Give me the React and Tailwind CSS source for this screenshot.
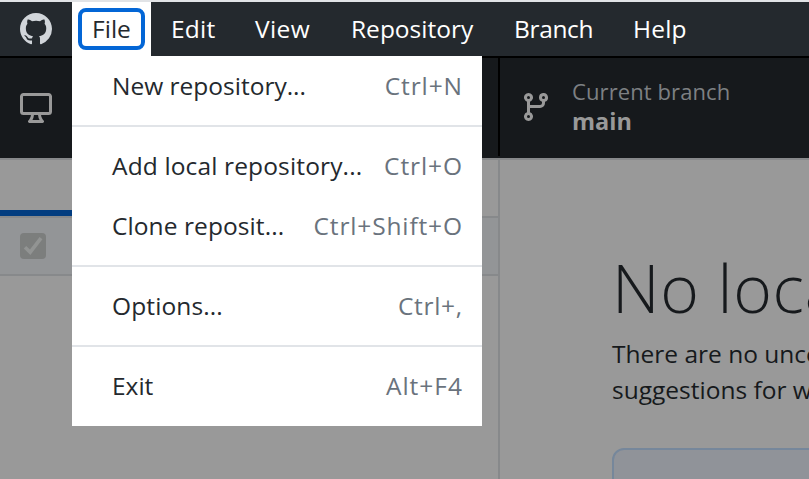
const menus = [
  { label: "Edit", box: "w-[84px]", text: "tracking-[0.2px]" },
  { label: "View", box: "w-[96px]", text: "tracking-[0.4px]" },
  { label: "Repository", box: "w-[163px]", text: "tracking-[0px]" },
  { label: "Branch", box: "w-[119px]", text: "tracking-[-0.35px]" },
  { label: "Help", box: "w-[93px]", text: "tracking-[0.2px]" },
];

function Item({ label, keys, labelClass = "", keysClass = "" }) {
  return (
    <div className="flex h-[60px] items-center justify-between whitespace-nowrap pr-[20px] pl-[40px]">
      <span className={labelClass}>{label}</span>
      <span className={"text-[#6a737d] " + keysClass}>{keys}</span>
    </div>
  );
}

function Separator() {
  return <div className="my-[9px] h-[2px] bg-[#e1e4e8]" />;
}

function MarkIcon() {
  return (
    <svg width="32" height="32" viewBox="0 0 16 16" fill="#d1d5da">
      <path d="M8 0C3.58 0 0 3.58 0 8c0 3.54 2.29 6.53 5.47 7.59.4.07.55-.17.55-.38 0-.19-.01-.82-.01-1.49-2.01.37-2.53-.49-2.69-.94-.09-.23-.48-.94-.82-1.13-.28-.15-.68-.52-.01-.53.63-.01 1.08.58 1.23.82.72 1.21 1.87.87 2.33.66.07-.52.28-.87.51-1.07-1.78-.2-3.64-.89-3.64-3.95 0-.87.31-1.59.82-2.15-.08-.2-.36-1.02.08-2.12 0 0 .67-.21 2.2.82.64-.18 1.32-.27 2-.27s1.36.09 2 .27c1.53-1.04 2.2-.82 2.2-.82.44 1.1.16 1.92.08 2.12.51.56.82 1.27.82 2.15 0 3.07-1.87 3.75-3.65 3.95.29.25.54.73.54 1.48 0 1.07-.01 1.93-.01 2.2 0 .21.15.46.55.38A8.01 8.01 0 0 0 16 8c0-4.42-3.58-8-8-8Z" />
    </svg>
  );
}

function DesktopIcon() {
  return (
    <svg width="32" height="32" viewBox="0 0 16 16" fill="#999999">
      <path d="M14.25 1c.966 0 1.75.784 1.75 1.75v7.5A1.75 1.75 0 0 1 14.25 12h-3.727c.099 1.041.52 1.872 1.292 2.757A.752.752 0 0 1 11.25 16h-6.5a.75.75 0 0 1-.565-1.243c.772-.885 1.192-1.716 1.292-2.757H1.75A1.75 1.75 0 0 1 0 10.25v-7.5C0 1.784.784 1 1.75 1ZM1.75 2.5a.25.25 0 0 0-.25.25v7.5c0 .138.112.25.25.25h12.5a.25.25 0 0 0 .25-.25v-7.5a.25.25 0 0 0-.25-.25ZM9.018 12H6.982a5.72 5.72 0 0 1-.765 2.5h3.566a5.72 5.72 0 0 1-.765-2.5Z" />
    </svg>
  );
}

function BranchIcon() {
  return (
    <svg width="32" height="32" viewBox="0 0 16 16" fill="#999999">
      <path fillRule="evenodd" d="M11.75 2.5a.75.75 0 1 0 0 1.5.75.75 0 0 0 0-1.5Zm-2.25.75a2.25 2.25 0 1 1 3 2.122V6A2.5 2.5 0 0 1 10 8.5H5v2.128a2.251 2.251 0 1 1-1.5 0V5.372a2.25 2.25 0 1 1 1.5 0V7h5a1 1 0 0 0 1-1v-.628A2.25 2.25 0 0 1 9.5 3.25ZM4.25 12a.75.75 0 1 0 0 1.5.75.75 0 0 0 0-1.5ZM3.5 3.25a.75.75 0 1 1 1.5 0 .75.75 0 0 1-1.5 0Z" />
    </svg>
  );
}

export default function App() {
  return (
    <div className="relative flex h-[479px] w-[809px] flex-col overflow-hidden bg-[#999999] font-['Open_Sans','Noto_Sans',sans-serif] text-[24.5px] leading-[36px] text-[#24292e]">
      <div className="h-[2px] shrink-0 bg-[#e1e3e6]" />
      <header className="flex h-[54px] shrink-0 bg-[#24292e] text-white">
        <div className="flex w-[72px] items-center justify-center">
          <MarkIcon />
        </div>
        <div className="flex w-[79px] items-center justify-center bg-white text-[#24292e]">
          <div className="flex h-[42px] w-[67px] items-center justify-center rounded-[8px] border-4 border-[#0366d6]">
            File
          </div>
        </div>
        {menus.map((m) => (
          <div key={m.label} className={"flex items-center pl-[20px] " + m.box}>
            <span className={m.text}>{m.label}</span>
          </div>
        ))}
      </header>

      <div className="flex h-[102px] shrink-0 border-t-2 border-black bg-[#16191c]">
        <div className="flex h-[98px] w-[500px] items-center border-r-2 border-black pl-[20px]">
          <DesktopIcon />
        </div>
        <div className="flex h-[98px] items-center pl-[20px]">
          <BranchIcon />
          <div className="-mt-[2px] ml-[20px] flex flex-col whitespace-nowrap text-[22px]">
            <span className="h-[29px] leading-[29px] tracking-[0.1px] text-[#7d8083]">Current branch</span>
            <span className="text-[23.5px] leading-[30px] font-bold text-[#999999]">main</span>
          </div>
        </div>
      </div>

      <main className="flex flex-1 border-t-2 border-[#87898b]">
        <aside className="w-[500px] shrink-0 border-r-2 border-[#87898b]">
          <div className="flex h-[56px] items-end">
            <div className="h-[6px] w-[250px] bg-[#023d80]" />
          </div>
          <div className="flex h-[60px] items-center border-y-2 border-[#87898b] bg-[#939597] pl-[20px]">
            <div className="h-[26px] w-[26px] rounded-[4px] bg-[#7c7e7d]">
              <svg width="26" height="26" viewBox="0 0 26 26" fill="none" stroke="#929493" strokeWidth="3.6">
                <path d="M5 14.2 10.2 19.2 21 5.2" />
              </svg>
            </div>
          </div>
        </aside>
        <section className="min-w-0 flex-1 overflow-hidden whitespace-nowrap pl-[112px] text-[#16191c]">
          <h1 className="mt-[82px] h-[94px] text-[66px] leading-[90px] font-light tracking-[0.7px]">No local changes</h1>
          <p>
            There are no uncommitted changes
            <br />
            suggestions for what to do next
          </p>
          <div className="mt-[40px] h-[120px] w-[400px] rounded-[12px] border-2 border-[#76879b] bg-[#909399]" />
        </section>
      </main>

      <div className="absolute top-[56px] left-[72px] h-[370px] w-[410px] bg-white">
        <Item label="New repository..." keys="Ctrl+N" keysClass="tracking-[0.9px] -mr-[0.9px]" />
        <Separator />
        <Item label="Add local repository..." labelClass="tracking-[0.14px]" keys="Ctrl+O" keysClass="tracking-[0.9px] -mr-[0.9px]" />
        <Item label="Clone reposit..." labelClass="tracking-[0.08px]" keys="Ctrl+Shift+O" keysClass="tracking-[0.85px] -mr-[0.85px]" />
        <Separator />
        <Item label="Options..." labelClass="tracking-[0.12px]" keys="Ctrl+," keysClass="tracking-[0.65px] -mr-[0.65px]" />
        <Separator />
        <Item label="Exit" keys="Alt+F4" keysClass="tracking-[1px] -mr-[1px]" />
      </div>
    </div>
  );
}
